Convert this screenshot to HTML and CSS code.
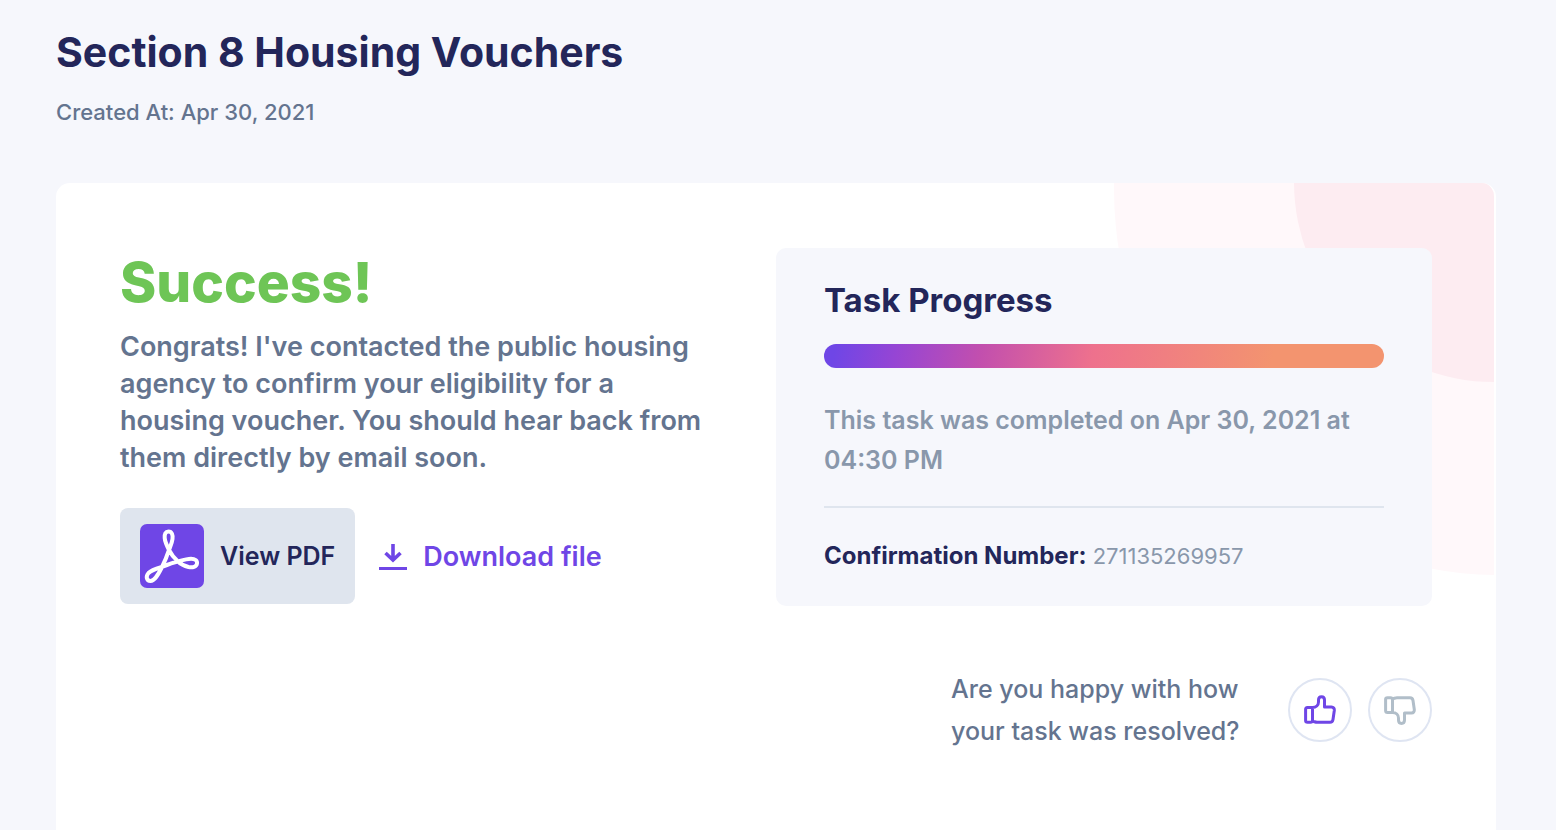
FILE: index.html
```html
<!DOCTYPE html>
<html lang="en">
<head>
  <meta charset="UTF-8">
  <title>Section 8 Housing Vouchers</title>
  <link rel="stylesheet" href="styles.css">
</head>
<body>

<header class="page-header">
  <h1>Section 8 Housing Vouchers</h1>
  <p class="created">Created At: Apr 30, 2021</p>
</header>

<main class="card">
  <div class="columns">
    <section class="result">
      <h2>Success!</h2>
      <p class="message">Congrats! I've contacted the public housing agency to confirm your eligibility for a housing voucher. You should hear back from them directly by email soon.</p>
      <div class="files">
        <button type="button" class="pdf-btn">
          <svg class="pdf-icon" viewBox="0 0 64 64" aria-hidden="true">
            <rect width="64" height="64" rx="7" fill="#6f46e6"/>
            <path d="M28.500 7.500C32 7.500 33 11 32.500 15C32 19 30.500 22 29 26C27 32 24.500 38 22 43C18 51 14.500 57 10.500 57C6.500 57 5.500 52.500 8.500 49C11.500 46 17 44.500 22 43C28 40.500 33 38.500 38 37.500C43 36 47 34.700 51 34.700C55 34.700 57.500 36.500 57 39.500C56.500 43 52.500 43.800 48.500 43C44.500 42 41 40.500 38 37.500C34 34 31 30 29 26C27 22 25 18 24.700 14C24.400 10 25.500 7.500 28.500 7.500Z" fill="none" stroke="#fff" stroke-width="4" stroke-linejoin="round"/>
          </svg>
          View PDF
        </button>
        <a class="download" href="#">
          <svg class="download-icon" viewBox="0 0 28 28" fill="none" stroke="#6f46e6" aria-hidden="true">
            <path stroke-width="3.600" d="M14 2V18M6.500 11L14 18L21.500 11"/>
            <path stroke-width="3" d="M0 26.500H28"/>
          </svg>
          Download file
        </a>
      </div>
    </section>

    <section class="progress-panel">
      <h3>Task Progress</h3>
      <div class="bar" role="progressbar" aria-label="Task Progress" aria-valuenow="100" aria-valuemin="0" aria-valuemax="100"></div>
      <p class="completed">This task was completed on Apr 30, 2021 at 04:30 PM</p>
      <p class="confirmation"><strong>Confirmation Number:</strong> 271135269957</p>
    </section>
  </div>

  <div class="feedback">
    <p>Are you happy with how your task was resolved?</p>
    <div class="votes">
      <button type="button" class="vote vote-up" aria-label="Yes">
        <svg viewBox="0 0 32 32" fill="none" stroke="currentColor" stroke-width="3" stroke-linejoin="round" aria-hidden="true">
          <path d="M8.500 14V28M3.500 13.500H8.500C12 13.500 14.500 11 14.500 8V6C14.500 1.500 20.500 1.500 20.500 6V13H27.500C29.500 13 30.500 14.500 30.300 16.500L29 25.500C28.700 27.500 27.500 28.300 26 28.300H13C11 28.300 9.500 27 8.500 27.500C7.500 28.300 7 28.300 6.500 28.300H3.500C2.300 28.300 1.600 27.600 1.600 26.500V15.500C1.600 14.300 2.300 13.500 3.500 13.500Z"/>
        </svg>
      </button>
      <button type="button" class="vote vote-down" aria-label="No">
        <svg viewBox="0 0 32 32" fill="none" stroke="currentColor" stroke-width="3" stroke-linejoin="round" aria-hidden="true">
          <path d="M8.500 18V4M3.500 18.500H8.500C12 18.500 14.500 21 14.500 24V26C14.500 30.500 20.500 30.500 20.500 26V19H27.500C29.500 19 30.500 17.500 30.300 15.500L29 6.500C28.700 4.500 27.500 3.700 26 3.700H13C11 3.700 9.500 5 8.500 4.500C7.500 3.700 7 3.700 6.500 3.700H3.500C2.300 3.700 1.600 4.400 1.600 5.500V16.500C1.600 17.700 2.300 18.500 3.500 18.500Z"/>
        </svg>
      </button>
    </div>
  </div>
</main>

</body>
</html>
```

FILE: styles.css
```css
* { box-sizing: border-box; }
body { margin: 0; min-height: 100vh; padding: 24px 60px 0 56px; display: flex; flex-direction: column; font-family: Inter, "Open Sans", sans-serif; background: #f6f7fc; color: #23265a; }
h1, h2, h3, p { margin: 0; }
button { font: inherit; cursor: pointer; }

.page-header { padding-bottom: 55px; }
h1 { font-size: 41px; line-height: 56px; font-weight: 700; }
.created { margin-top: 16px; font-size: 22px; line-height: 32px; font-weight: 500; color: #64748f; }

.card { position: relative; flex: 1; padding: 65px 62px 65px 64px; overflow: hidden; background: #fff; border-right: 2px solid #fff; border-radius: 14px 14px 0 0; }

/* pink circles in the corner */
.card::before, .card::after { content: ""; position: absolute; border-radius: 50%; }
.card::before { width: 772px; height: 772px; top: -380px; right: -392px; background: #fff8fa; }
.card::after { width: 400px; height: 400px; top: -201px; right: -200px; background: #fdecf1; }

.columns { position: relative; z-index: 1; display: grid; grid-template-columns: 1fr 1fr; }

h2 { font-size: 55px; line-height: 68px; font-weight: 800; color: #6ec556; }
.message { max-width: 600px; margin-top: 12px; font-size: 27px; line-height: 37px; font-weight: 600; color: #64748f; }
.files { display: flex; align-items: center; gap: 24px; margin-top: 32px; }
.pdf-btn { display: flex; align-items: center; gap: 16px; height: 96px; padding: 16px 20px; border: 0; border-radius: 8px; background: #dfe5ee; color: #23265a; font-size: 25px; font-weight: 600; white-space: nowrap; }
.pdf-icon { width: 64px; height: 64px; }
.download { display: flex; align-items: center; gap: 16px; color: #6f46e6; font-size: 27px; font-weight: 600; text-decoration: none; }
.download-icon { width: 28px; height: 28px; }

.progress-panel { padding: 32px 48px 34px; border-radius: 10px; background: #f6f7fc; }
h3 { font-size: 33px; line-height: 40px; font-weight: 700; }
.bar { height: 24px; margin-top: 24px; border-radius: 12px; background: linear-gradient(100deg, #6f46e6 2%, #9645d4 13%, #c24fae 28%, #ee718d 48%, #f3946f 80%); }
.completed { margin-top: 32px; padding-bottom: 26px; border-bottom: 2px solid #dfe5ee; font-size: 25px; line-height: 40px; font-weight: 600; color: #8997ab; }
.confirmation { margin-top: 32px; font-size: 22px; line-height: 32px; color: #8997ab; }
.confirmation strong { color: #23265a; font-size: 24px; font-weight: 700; }

.feedback { position: relative; z-index: 1; display: flex; justify-content: flex-end; align-items: center; gap: 48px; margin-top: 62px; }
.feedback p { width: 289px; font-size: 25px; line-height: 42px; font-weight: 500; color: #64748f; }
.votes { display: flex; gap: 16px; }
.vote { display: flex; align-items: center; justify-content: center; width: 64px; height: 64px; padding: 0; border: 2px solid #dfe5f2; border-radius: 50%; background: #fff; }
.vote svg { width: 32px; height: 32px; }
.vote-up { color: #6f46e6; }
.vote-down { color: #b1bec9; }
```
